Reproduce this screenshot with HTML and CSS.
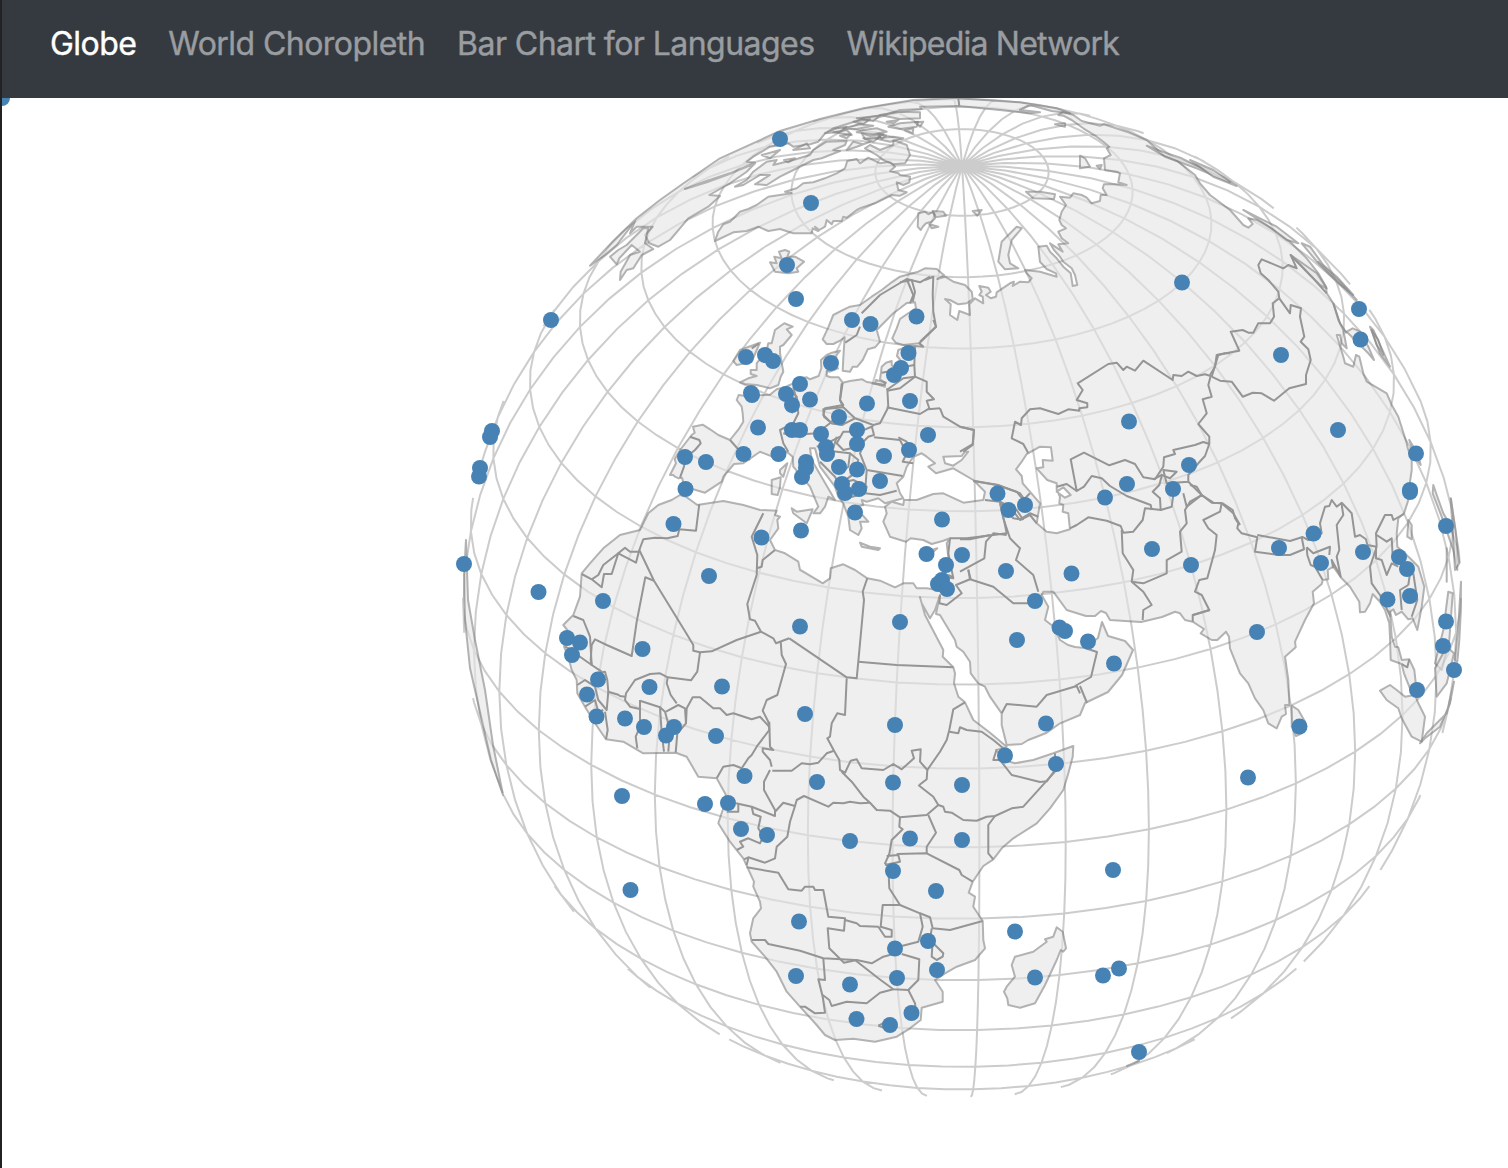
FILE: index.html
```html
<!DOCTYPE html>
<html lang="en">
<head>
<meta charset="utf-8">
<title>Globe</title>
<link rel="stylesheet" href="styles.css">
</head>
<body>
<nav class="navbar">
  <a class="nav-link active">Globe</a>
  <a class="nav-link">World Choropleth</a>
  <a class="nav-link">Bar Chart for Languages</a>
  <a class="nav-link last">Wikipedia Network</a>
</nav>
<svg class="globe" viewBox="2 98 1506 1070" width="1506" height="1070">
  <path id="graticule" class="graticule"/>
  <g id="land" class="land"></g>
  <g id="borders" class="borders"></g>
  <g id="capitals" class="capitals"></g>
</svg>
<script src="globe.js"></script>
</body>
</html>
```
FILE: styles.css
```css
* { box-sizing: border-box; }
html { background: #fff; }
body {
  margin: 0;
  height: 1168px;
  overflow: hidden;
  border-left: 2px solid #222;
  font-family: Inter, "Liberation Sans", sans-serif;
}
.navbar {
  display: flex;
  gap: 32px;
  height: 98px;
  padding: 20px 0 0 48px;
  background: #353a40;
}
.nav-link {
  font-size: 32px;
  line-height: 48px;
  letter-spacing: -0.55px;
  white-space: nowrap;
  color: #9a9da0;
  -webkit-text-stroke: 0.4px currentColor;
}
.nav-link.active { color: #fff; }
.nav-link.last { letter-spacing: -0.78px; }
.globe { display: block; }
.graticule { fill: none; stroke: #ccc; stroke-width: 2; }
.land path {
  fill: #e5e5e5;
  fill-rule: evenodd;
  stroke: #808080;
  stroke-width: 2;
  stroke-linejoin: round;
  opacity: .6;
}
.borders path { fill: none; stroke: #959595; stroke-width: 2; stroke-linejoin: round; }
.capitals circle { fill: #4682b4; }
```
FILE: globe.js
```js
const NS = "http://www.w3.org/2000/svg";
const CX = 962, CY = 598, R = 499, LON0 = 38, TILT = 30;
const rad = Math.PI / 180;

function project([lon, lat]) {
  const l = (lon - LON0) * rad, p = lat * rad, t = TILT * rad;
  const depth = Math.sin(t) * Math.sin(p) + Math.cos(t) * Math.cos(p) * Math.cos(l);
  if (depth < 0) return null;
  return [CX + R * Math.cos(p) * Math.sin(l),
          CY - R * (Math.cos(t) * Math.sin(p) - Math.sin(t) * Math.cos(p) * Math.cos(l))];
}
// Last visible point between a visible and a hidden coordinate.
function horizon(seen, hidden) {
  for (let i = 0; i < 20; i++) {
    const mid = [(seen[0] + hidden[0]) / 2, (seen[1] + hidden[1]) / 2];
    if (project(mid)) seen = mid; else hidden = mid;
  }
  return project(seen);
}
function trace(coords) {
  let d = "", prev = null, was = null;
  const put = (c, p) => { d += c + p[0].toFixed(1) + " " + p[1].toFixed(1); };
  for (const c of coords) {
    const p = project(c);
    if (p && was) put("L", p);
    else if (p && prev) { put("M", horizon(c, prev)); put("L", p); }
    else if (p) put("M", p);
    else if (was) put("L", horizon(prev, c));
    prev = c; was = p;
  }
  return d;
}
let grid = "";
for (let lon = -180; lon < 180; lon += 10) {
  const line = [];
  for (let lat = -90; lat <= 90; lat += 5) line.push([lon, lat]);
  grid += trace(line);
}
for (let lat = -80; lat <= 80; lat += 10) {
  const line = [];
  for (let lon = -180; lon <= 180; lon += 5) line.push([lon, lat]);
  grid += trace(line);
}
document.getElementById("graticule").setAttribute("d", grid);

// Shapes are stored per map sheet: a letter picks the sheet, the numbers are x y pairs in thirds of a pixel.
const SHEETS = { A: [580, 95, 3], B: [900, 95, 3], C: [1190, 130, 3], D: [660, 300, 3], E: [800, 320, 3],
  F: [540, 500, 3], G: [740, 540, 3], H: [700, 740, 3], I: [960, 340, 3], J: [1180, 440, 3], R: [0, 0, 1] };
function shape(text) {
  let o = SHEETS.R, d = "", cmd = "M", x = null;
  for (const tok of text.trim().split(/\s+/)) {
    if (tok === "Z") { d += "Z"; cmd = "M"; continue; }
    if (SHEETS[tok]) { o = SHEETS[tok]; continue; }
    if (x === null) { x = +tok; continue; }
    d += cmd + (o[0] + x / o[2]).toFixed(1) + " " + (o[1] + tok / o[2]).toFixed(1);
    cmd = "L"; x = null;
  }
  return d;
}
function add(id, list) {
  const g = document.getElementById(id);
  for (const s of list) {
    const p = document.createElementNS(NS, "path");
    p.setAttribute("d", shape(s));
    g.appendChild(p);
  }
}

add("land", [
// Eurasia and Africa, with the Azov and Caspian seas cut out
`D 76 568 66 533 56 535 45 530 40 525 30 525 48 490 44 478 60 450 95 405 104 398 99 380 128 374 150 388 175 405 210 420 238 385 250 365 248 340 245 320 230 300 236 285 272 290 300 286 330 284 350 268 378 260 400 250 412 237 440 232 450 238 476 228 484 205 483 180 500 165 516 158 540 152 530 165 525 180 522 190 534 205 510 215 500 212 500 228 512 232 536 232 548 248
E 150 183 187 178 200 186 215 188 228 192 255 200 255 188 240 178 243 158 245 140 258 128 275 123 275 135 290 150 305 125 291 108 295 90 310 85 345 78 370 80 358 70 310 75 287 68 277 55 290 25
B 0 672 25 655 48 640 45 622 20 624 0 640 A 940 655 E 230 30 240 65 225 82 203 88 188 120 172 140 158 140 150 155 128 152 130 115 133 70 134 52 120 62 100 72 80 72 68 58 85 22
D 520 45 545 32 570 20 A 840 630 875 605 905 585 935 562 960 545 1015 530 1035 520 1070 522 1085 535 1092 540 1080 548
B 112 552 135 545 160 560 195 570 215 590 218 612 200 625 175 628 150 615 135 612 152 628 150 660 172 675 178 648 210 660 208 628 225 610 250 625 248 605 238 600 245 590 238 573 265 578 272 590 258 600 272 610 288 605 290 592 330 565 342 560 338 573 360 560 385 562 395 550 380 535 375 525 420 530 470 545 468 535 440 522 420 500 415 455 440 452 450 470 470 490 490 515 512 535 518 573 532 570 525 540 515 520 490 500 480 485 462 465 450 445 465 455 488 470 475 448 505 445 485 430 475 410 498 400 485 390 478 375 485 350 498 330 480 305 510 308 520 295 545 300 560 308 575 325 600 318 602 300 620 300 608 280 612 268 640 268 680 270 655 262 660 235 650 230 615 225 612 190 632 180 620 160 628 155 610 140 590 125 550 100 515 75 490 62 475 60 490 50 520 60 545 78 600 92 612 88 680 110 740 135 790 180 835 200 885 240 900 265 930 300 990 345
C 160 285 175 293 188 282 175 265 200 270 250 298 300 335 350 385 385 430 408 470 410 490 430 520 445 570 460 600 470 655 455 640 450 615 440 615 460 680 465 700 490 710 498 675 508 680 520 730 530 755 590 790 605 825 625 860 650 940
J 682 20 695 60 695 90 688 140 685 180 672 220 655 235 650 280 652 320 690 355 715 380 733 440 725 500 712 570 698 535 685 538 665 515 648 525 640 508 630 515 633 560 635 590 645 620 655 622 665 660 688 658 703 690 710 755 690 745 672 700 665 672 632 660 630 590 628 550 615 510 600 485 578 462 570 490 555 515 540 517 538 485 510 440 485 415 460 380 443 390 445 418 428 420 425 432 398 455 402 490 375 540 345 605 347 622 315 650 325 720 328 795 315 795 318 822 305 830 290 865 265 850 250 810 225 775 205 730 180 700 150 625 147 590 138 575 112 600 95 600 62 580 72 567 38 545 15 540 0 520
I 645 815 R 1162 617 1141 622 1110 620 1106 613 1101 611 1095 616 1086 616 I 320 810 280 755 250 755 245 765 265 800 R 1045 620 1054 627 1060 640 1068 645 1075 647 1085 648 1098 638 1102 622 1108 636 1125 641 1133 650 1122 675 1108 692 1085 703
G 1020 525 960 550 920 578 890 590 865 600 845 612 800 615 785 555 785 520 750 470 735 440 715 430 692 400 690 365 670 335 650 320 645 300 600 225 588 222 600 165 585 210 570 235 545 190 540 172 555 225 610 330 608 350 640 382 645 400 642 430 655 470 675 487 700 540 750 578 800 620 770 630 790 660 825 670 880 660 940 640 1000 618 998 650 985 700
H 1090 150 1050 205 1010 250 940 295 905 325 880 358 850 378 818 425 806 458 825 470 820 500 848 543 850 600 855 625 825 660 770 680 735 700 705 720 728 755 728 785 665 803 662 840 630 865 590 890 525 905 460 896 405 900 375 885 350 855 300 800 260 755 230 695 195 650 155 605 150 580 160 535 183 505 180 485 160 440 162 425 130 355 90 305 55 250 70 205 78 165 50 115
F 475 830 440 770 408 758 310 760 250 725 198 718 165 670 135 620 112 580 110 540 95 510 85 470 72 440 90 400 70 375 100 345 120 290 125 220 150 190 190 145 240 105 300 90 325 40 355 15
D 35 600 60 585 78 590 112 615 190 603 250 615 300 630 350 632 345 645 360 650
F 712 60 715 85 690 120 705 150 735 160 775 185 780 210 840 245 G 182 90 248 130 270 115 272 85 310 73 345 90 382 115 420 122 465 142 490 130 520 130 530 145 560 145 592 150 620 90 625 50
E 440 670 450 655 430 662 395 672 370 660 332 655 318 665 270 650 250 605 260 580 255 560 275 545 310 555 312 540 350 540 400 522 430 520 490 548 550 540 555 515 520 480 460 445 408 460 385 440 405 430 380 410 365 400 340 410 320 440 310 470 290 490 300 520 310 535 290 540 255 550 245 542 235 535 200 545 185 540 190 555 165 560 205 605 180 605 185 625 175 645 150 630 145 590 130 550 115 530 105 500 60 440 45 385 30 385
D 455 480 490 540 525 600 505 590 495 620 480 640 460 640 475 620 450 560 400 500 398 470 380 455 350 475 300 455 250 490 222 492 190 530 185 545 135 578 100 568 Z
E 430 410 485 408 495 395 505 395 485 420 460 437 435 430 Z
I 200 342 240 320 273 322 278 362 248 360 250 382 230 385 262 420 290 430 290 450 300 470 298 490 310 495 308 515 325 520 330 568 290 580 260 575 230 550 235 520 240 490 188 430 185 408 168 388 185 365 Z I 290 455 310 442 332 465 315 473 Z`,
// Greenland
`A 405 438 415 410 430 388 450 380 480 350 505 342 530 330 565 305 600 300 635 295 615 290 650 280 670 265 700 262 735 250 770 235 795 220 802 198 830 192 840 205 865 188 900 205 930 200 945 215 930 228 955 235 960 240 990 245 988 262 970 270 950 262 955 285 980 292 960 302 935 300 885 325 840 340 830 345 800 368 790 365 785 378 760 378 755 388 740 375 735 395 718 405 705 395 715 408 698 400 695 415 640 415 600 402 565 408 535 395 500 408 460 412 Z`,
// Iceland
`A 570 502 590 505 583 485 605 490 597 470 615 465 628 470 622 485 645 485 672 500 650 520 655 530 625 535 585 530 Z`,
// North America
`A 30 512 100 438 170 370 240 315 315 262 420 190 600 108 720 72 850 40 1000 15 1140 8 B 175 10 360 22 470 40 510 55 455 48 390 30 360 45 420 52 390 55 300 45 175 33 60 35 A 1025 42 960 45 920 58 850 70 830 78 760 100 735 115 715 140 690 148 640 155 625 145 600 150 570 155 520 185 500 200 525 203 450 235 380 258 315 282 380 262 440 240 525 205 500 230 450 265 388 300 420 303 385 335 325 370 270 435 235 455 208 445 195 420 218 395 170 395 150 415 165 378 110 450 75 480 Z`,
`A 120 555 122 530 145 490 150 480 180 470 155 450 118 490 110 508 90 485 115 465 140 450 190 400 205 400 195 445 220 462 185 480 160 520 140 525 Z`,
`A 465 275 500 255 520 230 560 200 590 195 580 210 640 195 690 180 700 165 740 140 800 138 795 150 760 165 780 168 725 190 700 195 640 225 600 245 560 270 525 268 570 240 540 240 490 270 Z`,
`A 855 160 870 150 900 165 940 150 940 135 980 150 990 180 975 205 940 208 910 195 890 180 Z`,
`A 800 165 820 140 850 148 870 140 830 155 Z`, `A 735 115 770 100 800 95 780 110 Z`, `A 900 60 960 50 1020 52 1020 70 960 72 Z`,
`A 925 95 960 85 1015 80 1010 95 960 102 Z`, `A 850 105 890 100 920 110 880 118 830 112 Z`, `A 885 130 940 125 970 130 930 140 Z`,
`A 975 105 1000 100 998 115 Z`, `A 1005 82 1030 80 1020 95 Z`, `A 850 130 900 125 880 140 Z`, `A 760 112 800 105 815 120 Z`, `A 830 70 900 62 880 78 Z`,
`A 845 115 870 122 910 118 890 130 855 132 Z`, `A 790 100 840 88 880 92 830 102 Z`, `A 545 180 600 165 570 190 Z`, `A 612 195 645 190 625 202 Z`, `A 640 165 680 145 690 160 Z`,
`A 920 80 955 75 940 85 Z`, `A 895 118 918 122 905 132 Z`, `A 780 122 812 118 800 130 Z`, `A 820 80 870 72 850 88 Z`,
// Great Britain and Ireland
`D 373 70 398 80 380 88 395 105 370 135 360 140 360 160 370 215 362 230 355 255 330 265 290 255 255 252 240 247 265 235 290 228 272 222 272 210 290 210 290 190 320 150 325 130 335 130 345 90 Z`,
`D 220 183 240 150 300 128 290 150 275 185 230 195 Z`,
// Svalbard, Franz Josef Land, Novaya Zemlya
`B 55 355 75 350 85 358 100 350 105 370 95 380 78 385 68 395 62 405 53 395 Z`, `B 98 348 130 350 138 362 108 366 Z`, `B 88 388 115 395 95 400 Z`, `B 218 348 245 345 232 362 Z`,
`B 350 395 365 400 335 435 325 480 330 505 355 520 315 523 295 500 300 470 305 440 Z`,
`B 378 290 420 290 465 298 462 312 400 310 Z`, `B 540 182 555 190 570 215 540 220 Z`, `B 590 212 605 210 600 222 Z`, `B 465 88 495 85 495 95 Z`,
// Mediterranean islands
`D 395 625 410 635 458 628 440 670 400 640 Z`, `D 335 540 362 532 360 560 353 585 335 582 Z`, `D 360 510 382 490 370 530 360 520 Z`,
`E 180 668 210 680 240 685 235 690 185 680 Z`, `E 370 700 412 685 395 700 380 712 Z`, `E 228 180 258 188 250 195 225 190 Z`,
// Madagascar
`H 1070 562 1088 575 1098 625 1090 635 1082 630 1070 660 1035 735 1005 790 960 803 925 795 922 775 912 755 920 740 945 710 935 675 945 650 1000 635 1040 605 1035 598 1060 590 Z`,
// Sri Lanka, Sumatra, Hainan
`J 335 797 355 810 375 845 365 880 348 888 335 860 Z`,
`J 600 752 630 735 650 750 675 770 705 765 715 790 730 820 735 830 725 905 695 890 665 835 655 805 620 780 Z`, `J 685 240 695 255 695 298 682 290 Z`,
// Japan, Sakhalin, Kurils
`C 160 240 210 265 260 290 325 340 290 330 230 285 Z`, `C 335 340 360 350 400 405 440 440 490 495 440 455 385 400 Z`,
`C 302 375 345 405 380 430 410 475 390 465 360 435 Z`, `C 470 605 488 595 510 605 535 650 552 690 535 670 Z`, `C 540 590 550 600 600 710 570 670 Z`, `C 545 600 565 630 580 675 560 645 Z`, `C 385 395 450 455 500 510 Z`,
// Taiwan, Philippines, Borneo, Java
`J 688 0 715 45 722 75 705 50 Z`, `J 760 135 770 165 790 220 810 255 830 320 832 390 820 330 785 230 758 160 Z`, `J 805 455 818 460 808 600 785 690 765 670 790 570 Z`,
`J 765 685 770 770 800 730 822 640 800 620 Z`, `J 843 425 842 520 838 600 832 665 825 660 835 560 Z`, `J 720 910 740 880 800 820 822 725 810 790 780 860 735 895 Z`,
`J 800 325 800 425 Z`, `J 812 175 825 260 838 370 825 390 Z`,
`B 740 152 800 175 845 190 990 262 890 220 795 185 Z`, `C 0 90 70 120 140 168 70 140 Z`,
// South America
`R 466 540 464 575 465 620 470 668 480 712 491 760 503 795 493 745 485 690 475 640 468 600 467 570 Z`,
`R 1127 1066 1139 1061 Z`
]);

add("borders", [
// North-west Africa
`F 478 12 472 60 468 92 418 88 413 108 382 115 345 113 310 118 298 150 288 188 235 160 255 143 270 155 300 155`,
`F 125 222 155 238 185 262 192 222 215 222 235 160 190 195 175 225 155 238`,
`F 298 150 342 242 440 402 460 435 460 452 480 457 515 454 590 420 663 395 645 362 630 358 622 312 650 225 652 165 635 110 670 40`,
`F 342 242 316 232 290 365 275 468 200 435 165 418 155 435 152 480 155 495 185 515`,
`F 100 348 130 360 150 410 155 495 120 470 80 460`, `F 75 440 105 455`, `F 480 457 472 515 453 541 383 532 360 520 330 522 285 540 258 580 255 600 270 620 302 628`,
`F 255 590 240 588 235 584 205 575 202 540 195 515 165 520`, `F 112 555 135 540 165 560 175 600 200 630 205 575`, `F 135 620 165 600 175 635 190 630`, `F 195 635 203 690 198 718`,
`F 300 600 300 680 287 710 292 745`, `F 300 602 360 622 365 700 372 755`, `F 360 622 375 635 390 690 385 755`, `F 378 635 415 615 435 625 438 670 412 700 407 758`,
`F 383 532 380 550 392 585 410 610`, `F 438 670 440 625 458 592 480 592 520 625 540 625 560 645 580 640 635 658 660 650 688 680`,
`F 663 395 700 415 708 430 748 415`, `F 722 425 725 465 738 492 712 585 680 600 668 632 685 665 688 690 650 740 635 765 625 775 605 805 580 795 550 800 530 835`,
`F 688 665 690 740 700 750 668 745 668 755 690 780 695 800`, `F 705 150 668 180 665 200 650 205`,
// Sahara and the Nile
`G 382 115 368 155 372 180 355 365 350 415 320 412 148 295`, `G 355 365 470 375 640 382`, `G 320 415 315 525 292 520 275 550 270 590 262 595 282 632 260 640 235 668 210 673 185 670 155 692 97 692`,
`G 282 632 298 660 300 690 315 698 332 662 350 658 365 685 430 690 460 672 485 688 522 655 515 632 542 628 540 665 562 690 560 718 538 735`,
`G 562 690 600 635 620 600 628 570 640 508 675 487`, `G 628 575 655 580 660 562 680 570 725 575 760 600 790 625`, `G 770 628 760 660 780 660 815 705 900 726 920 724 945 690 945 640`,
// Central and southern Africa
`H 210 90 192 125 192 150 225 210 225 228 155 200 108 190`, `H 80 215 115 215 115 190`, `H 155 200 160 222 182 230 175 265 190 290 180 310 145 295 120 305 130 320 110 330`,
`H 225 215 250 188 285 198 290 180 312 168 385 200 400 188 430 190 450 185 480 190 510 188 490 170 455 125 425 95`, `H 285 198 270 245 262 290 230 320 225 355 195 368 145 352 132 358`, `H 140 375 145 355`,
`H 510 188 530 210 570 212 600 232 680 225 715 195 700 170 655 135`, `H 600 232 598 260 608 268 575 300 568 342 555 370 568 380`, `H 560 348 595 345 600 365 555 375`, `H 590 342 680 340 778 390 785 405 818 425`,
`H 680 340 680 320 708 278 685 225`, `H 715 195 730 200 735 215 755 218 790 240 830 242 860 230 885 228 935 205 970 200 1035 128 1065 95`, `H 885 228 865 255 865 340 880 358`,
`H 140 382 235 398 265 448 305 452 315 440 340 440 345 450 370 450 385 530 435 535 432 572 383 565 388 625 432 668 470 660 515 670 550 650 580 642`,
`H 435 540 470 550 480 558 535 560 555 590 575 590 575 570 542 560 548 495 600 495 568 445 565 380`, `H 600 495 660 520 668 560 655 605 605 618`, `H 660 520 690 532 698 565 750 570 848 543`,
`H 695 565 690 600 730 640 728 650 710 660 695 650 697 620`, `H 155 600 195 600 205 612 300 632 370 655 465 660 535 715 580 748 625 750 655 720 658 658 605 642`, `H 370 655 375 720 355 718 368 770 375 818 345 820 315 800 300 800`,
`H 368 765 388 780 395 798 440 785 500 790 540 758 580 748`, `H 625 750 645 790 650 830`, `H 535 857 570 840 590 860 565 868 535 857`,
// Arabia and Levant
`G 600 165 598 190 620 195 665 160 648 135 690 118 760 140 820 190 865 190`, `G 690 118 685 88`, `G 625 105 640 112`, `G 785 520 800 492 890 500 920 465 1010 438 1020 460`,
`R 1080 686 1087 703`, `R 1075 686 1091 677 1097 652 1085 648`,
// Europe
`D 60 533 72 500 75 475 105 450 122 430 118 420 90 410`, `D 210 420 250 465 270 480`, `D 380 260 410 290 415 340 400 370 360 390 370 430 385 455`, `D 370 400 410 410 440 402 470 400 510 370 530 350`,
`D 548 248 540 300 550 315 495 325 490 345 515 370 550 375`, `D 470 440 500 430 540 410`,
`D 400 262 410 300 395 340`, `D 275 145 297 130`, `D 556 128 590 105 600 80`, `A 845 655 900 600 980 552 1000 600 990 625`, `A 980 552 1020 562 1050 545`, `B 0 562 35 555 45 590 38 620`, `B 75 555 100 545 98 600 100 650 108 695 60 740`,
`E 125 190 120 240 130 262 165 295 220 315 240 310 265 262 262 205`, `E 130 262 70 268 72 290 95 310 125 315 165 295`, `E 262 212 300 205 345 170 380 185 380 215 402 238 380 242 388 265 360 282 260 262`, `E 420 265 385 268`,
`E 420 265 430 290 480 320 522 330 518 375 490 395`, `E 215 318 222 345 205 350 175 380 130 390 110 370 130 335 180 335 220 318`, `E 222 352 300 360 320 400 308 425 340 430`, `E 295 352 320 365 330 400`,
`E 190 375 180 400 200 450 290 465 308 468`, `E 200 450 195 520 240 525 290 512`, `E 110 350 100 385 60 380`, `E 60 390 110 395 150 400 145 440 120 460`, `E 150 400 175 420 165 460 120 490`, `E 120 490 160 480 200 500 195 520 140 535`, `E 60 425 105 470 130 520`,
`E 345 170 343 135 315 140 290 150 245 158`, `E 345 80 343 135`, `E 370 80 358 70 408 20 400 0`, `E 215 190 255 195`, `E 345 170 310 175 260 210`,
`E 520 483 590 495 650 515 670 540 690 520`, `E 555 540 600 545 640 595 660 598 690 580 715 590`, `E 600 545 610 590 620 640 580 645 500 655 450 655`, `E 600 545 650 570 670 600`, `E 450 655 445 700 460 775 440 772`,
// Central Asia
`I 0 260 42 270 38 312 0 335`, `I 205 340 190 312 155 295 165 245 183 255 185 235 210 208 240 205 295 222 325 208 358 212 358 205 382 202 382 190 350 180 368 150 353 130 445 72 470 68 490 90 500 80 525 92 550 62 638 120 640 105 665 108 685 95 710 108 735 103 752 108 745 135 755 170 728 178 740 220 715 252 748 290 748 312 730 306 705 315 640 330 645 342 612 352 610 380 585 418 550 412 525 372 495 360 448 376 372 338 332 358 350 453 372 440 395 408 425 415 450 438 500 468 572 495 575 510`,
`I 748 312 735 348 715 370 685 405 685 425 620 430 610 390 650 395 630 415 605 405 580 418`, `I 685 425 700 440 725 465 680 500 670 460`, `I 605 408 598 435 578 455 600 475 602 510 635 500 640 465`, `I 290 440 320 432 350 453`,
`I 330 565 350 555 385 532 440 542 482 558 490 578 520 575 548 540 555 505 605 510`, `I 485 570 488 640 520 690 515 725 550 730 620 700 620 660 665 635 660 575 680 550 675 510 690 485 725 465 760 488 785 490 780 515 730 540 745 565 770 585 765 630 742 715 718 720 705 755 725 765 748 810 700 825`,
`I 515 725 550 755 575 795 550 810 548 840`, `I 785 490 820 520 840 555`, `I 40 422 115 435 180 460 195 480`, `I 120 490 130 535 150 595 180 625 168 660 220 705 235 755`, `I 90 585 30 598 0 598`, `I 140 585 100 580 78 605 73 655 0 695`, `I 120 490 150 500 180 540 210 525 230 550`, `I 25 690 32 718`,
// Mongolia and China
`C 65 740 85 675 115 668 148 662 122 605 158 600 175 608 190 608 205 580 240 580 252 560 248 520 268 505 300 550 302 525 333 535 330 560 343 620 332 635 355 658 362 690 348 735 348 762 298 775 252 812 215 790 188 788 158 800 125 755 90 752 65 740`,
`C 268 505 265 485 235 450 212 430 205 405 215 388 280 415 295 405 320 415 302 375 365 440 410 490`, `C 430 520 450 580 470 610`, `B 990 775 975 775 950 780 945 815 930 840`,
// South Asia
`J 128 190 158 210 165 235 175 250 172 265 185 280 232 292 225 335 295 345 330 345 372 328 365 292 330 303 232 285`, `J 365 290 385 300 400 300 425 280 420 250 435 200 448 198 455 180 470 200 485 188 515 220 525 290 540 285 558 298 562 315 590 320`,
`J 380 322 400 340 450 320 448 345`, `J 380 322 382 345 392 375 405 380 428 420`, `J 485 195 490 225 470 255 478 330 470 350 482 410 455 360 460 385`, `J 590 320 588 280 615 225 635 225 640 240 672 222`, `J 590 285 620 305 635 295 638 350 690 400 685 435`, `J 588 320 588 355 605 360 620 405 635 370 655 380`, `J 590 320 570 380 575 430 600 465 632 530`, `J 685 435 660 450 665 510`, `J 700 400 712 480 695 530`, `J 90 510 38 525 38 545`,
`J 30 135 50 140 65 165 95 188 128 190`, `J 665 672 682 682 688 658`,
`B 175 10 178 33`
]);

const capitals = `780 139 811 203 787 265 796 299 551 320 852 320 870.5 324 916.5 316.5 1182 282.5 1359 309 1360.5 339.5 1281 355 1338 430
746 357 765 355 773 361 831 363 908.5 353 901 368 894 375 752 395 751 393 786 394 792 405 800 384 810 399.5 867 403.5 910 401 758 427.5 792 430 800 430 821 434 839 417 857 430 857 444 928 435 909 450 884 456 880 481 743.5 454 778.5 454 685 457 706 462 685.5 489 826 447 827 454 806 462 806 468 802 477 839 467 857 469.5 842 484 845 493 859 489 855 512.5 801 530.5 761.5 537.5 673.5 524
492 431 490 437 480 468 479 476.5 464 564 538.5 592 709 576 603 601 567 638 580 642.5 572 655 642.5 649 598 679.5 587 694.5 596.5 716.5 625 718.5 644 727 649.5 687 666 735.5 674 727 722 686.5 716 736 800 626.5 900 622 805 714 895 725 744.5 776 705 804 728 803 817 782 893 782.5 962 785 741 829 767 835 850 841 910 838.5 962 840 893 871 936 891 622 796 630.5 890 799 921.5 796 976 895 948.5 928 941 937 970 897 978 850 984.5 856.5 1019 890 1025 911.5 1013 1015 931.5 1035 977.5 1103 975.5 1119 968.5 1139 1052 1113 870 1248 777.5 1299.5 726.5
1129 421.5 1189 465 1173 489 1127 484 1105 497.5 997.5 493.5 1008.5 510 1025 505 942 519.5 926.5 554 962 555 946 565 938 584 942 580 947 589 1006 571 1071.5 573.5 1152 549 1191 565 1035 601 1017 640 1059.5 627.5 1065 631 1088 641.5 1114 663.5 1046 723.5 1005 755.5 1056 764 1257 632 1279 548 1313.5 533.5 1321 563 1363 552 1399 557 1407 569 1387.5 599.5 1410 596 1416 453.5 1410 490 1410 492 1446 526 1446 621.5 1443 646 1454 670 1417 690 2 98`.trim().split(/\s+/);
const dots = document.getElementById("capitals");
for (let i = 0; i < capitals.length; i += 2) {
  const c = document.createElementNS(NS, "circle");
  c.setAttribute("cx", capitals[i]);
  c.setAttribute("cy", capitals[i + 1]);
  c.setAttribute("r", 8);
  dots.appendChild(c);
}
```
